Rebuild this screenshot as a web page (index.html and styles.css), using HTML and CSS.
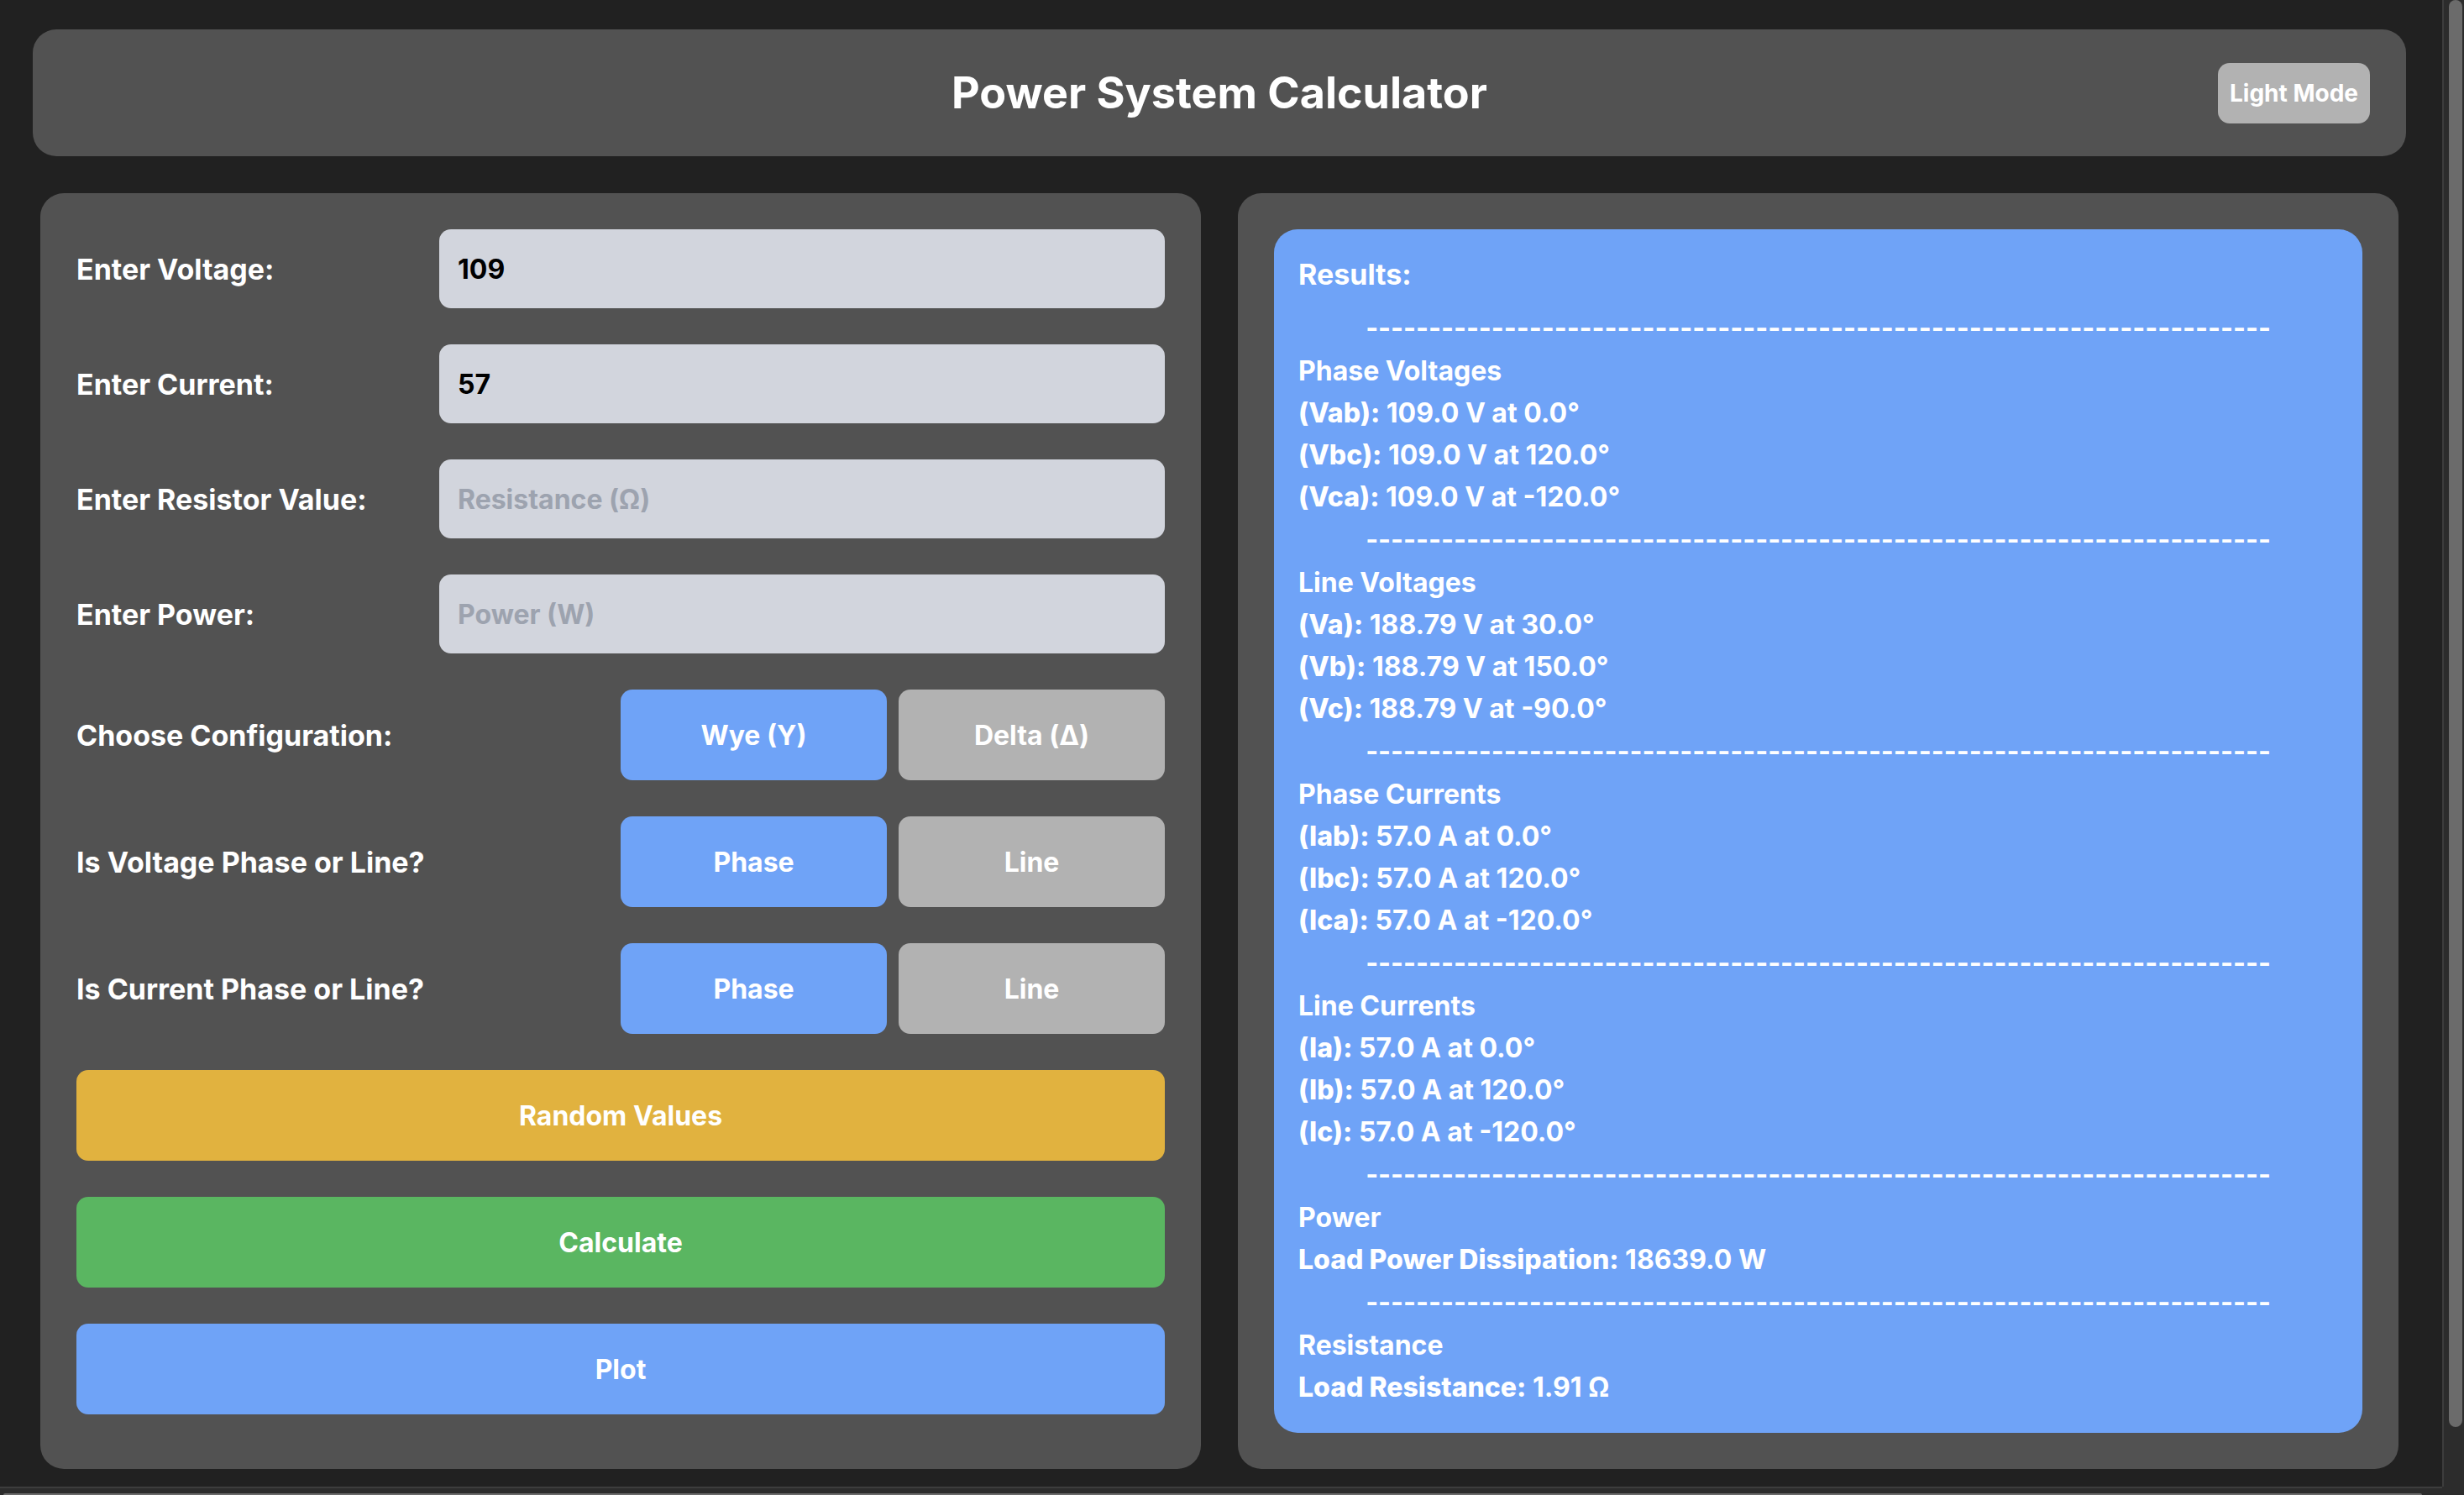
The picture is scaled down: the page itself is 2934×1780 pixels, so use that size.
FILE: index.html
```html
<!DOCTYPE html>
<html lang="en">
<head>
<meta charset="utf-8">
<title>Power System Calculator</title>
<link rel="stylesheet" href="styles.css">
</head>
<body>
<div class="window">
  <div class="page">
    <header class="header">
      <h1 class="title">Power System Calculator</h1>
      <button class="mode" type="button">Light Mode</button>
    </header>
    <main class="panels">
      <form class="panel form">
        <div class="field"><label for="voltage">Enter Voltage:</label><input id="voltage" type="text" placeholder="Voltage (V)" value="109"></div>
        <div class="field"><label for="current">Enter Current:</label><input id="current" type="text" placeholder="Current (A)" value="57"></div>
        <div class="field"><label for="resistance">Enter Resistor Value:</label><input id="resistance" type="text" placeholder="Resistance (Ω)"></div>
        <div class="field"><label for="power">Enter Power:</label><input id="power" type="text" placeholder="Power (W)"></div>
        <div class="choice" role="group" aria-labelledby="config-label">
          <span id="config-label">Choose Configuration:</span>
          <div class="options"><button class="btn blue" type="button">Wye (Y)</button><button class="btn grey" type="button">Delta (Δ)</button></div>
        </div>
        <div class="choice" role="group" aria-labelledby="voltage-type-label">
          <span id="voltage-type-label">Is Voltage Phase or Line?</span>
          <div class="options"><button class="btn blue" type="button">Phase</button><button class="btn grey" type="button">Line</button></div>
        </div>
        <div class="choice" role="group" aria-labelledby="current-type-label">
          <span id="current-type-label">Is Current Phase or Line?</span>
          <div class="options"><button class="btn blue" type="button">Phase</button><button class="btn grey" type="button">Line</button></div>
        </div>
        <button class="btn yellow" type="button">Random Values</button>
        <button class="btn green" type="button">Calculate</button>
        <button class="btn blue" type="button">Plot</button>
      </form>
      <section class="panel">
        <div class="results">
          <h2 class="results-title">Results:</h2>
          <p class="divider">------------------------------------------------------------------------</p>
          <h3>Phase Voltages</h3>
          <p><strong>(Vab):</strong> 109.0 V at 0.0°</p>
          <p><strong>(Vbc):</strong> 109.0 V at 120.0°</p>
          <p><strong>(Vca):</strong> 109.0 V at -120.0°</p>
          <p class="divider">------------------------------------------------------------------------</p>
          <h3>Line Voltages</h3>
          <p><strong>(Va):</strong> 188.79 V at 30.0°</p>
          <p><strong>(Vb):</strong> 188.79 V at 150.0°</p>
          <p><strong>(Vc):</strong> 188.79 V at -90.0°</p>
          <p class="divider">------------------------------------------------------------------------</p>
          <h3>Phase Currents</h3>
          <p><strong>(Iab):</strong> 57.0 A at 0.0°</p>
          <p><strong>(Ibc):</strong> 57.0 A at 120.0°</p>
          <p><strong>(Ica):</strong> 57.0 A at -120.0°</p>
          <p class="divider">------------------------------------------------------------------------</p>
          <h3>Line Currents</h3>
          <p><strong>(Ia):</strong> 57.0 A at 0.0°</p>
          <p><strong>(Ib):</strong> 57.0 A at 120.0°</p>
          <p><strong>(Ic):</strong> 57.0 A at -120.0°</p>
          <p class="divider">------------------------------------------------------------------------</p>
          <h3>Power</h3>
          <p><strong>Load Power Dissipation:</strong> 18639.0 W</p>
          <p class="divider">------------------------------------------------------------------------</p>
          <h3>Resistance</h3>
          <p><strong>Load Resistance:</strong> 1.91 Ω</p>
        </div>
      </section>
    </main>
  </div>
  <div class="track-v"><div class="thumb-v"></div></div>
  <div class="track-h"><div class="thumb-h"></div></div>
  <div class="corner"></div>
</div>
</body>
</html>
```
FILE: styles.css
```css
* { box-sizing: border-box; }

body {
  margin: 0;
  background: #212121;
  color: #fff;
  font-family: Inter, "Liberation Sans", sans-serif;
  font-size: 32px;
  font-weight: 650;
}

h1, h2, h3, p { margin: 0; }

button, input { font: inherit; border: 0; }

/* Page area with its two scroll tracks */
.window {
  display: grid;
  grid-template-columns: minmax(0, 1fr) 26px;
  grid-template-rows: 1fr 10px;
  min-height: 100vh;
}

.page { padding: 35px 43px 20px 39px; }

.header {
  display: grid;
  grid-template-columns: 1fr auto 1fr;
  align-items: center;
  padding: 40px 43px 39px;
  border-radius: 28px;
  background: #525252;
}

.title {
  grid-column: 2;
  font-size: 52px;
  line-height: 64px;
  font-weight: 700;
}

.mode {
  justify-self: end;
  height: 72px;
  padding: 0 14px;
  border-radius: 14px;
  background: #b2b2b2;
  color: #fff;
  font-size: 28px;
  font-weight: 700;
}

.panels {
  display: grid;
  grid-template-columns: 1fr 1fr;
  gap: 44px;
  padding: 44px 9px 0;
}

.panel {
  padding: 43px;
  border-radius: 28px;
  background: #525252;
}

.form {
  display: flex;
  flex-direction: column;
  gap: 43px;
  font-size: 34px;
  font-weight: 700;
}

.field {
  display: grid;
  grid-template-columns: 1fr 2fr;
  align-items: center;
}

.field input {
  width: 100%;
  height: 94px;
  padding: 0 22px;
  border-radius: 14px;
  background: #d2d5dd;
  color: #000;
  font-size: 32px;
  font-weight: 650;
}

.field input::placeholder { color: #9da3af; opacity: 1; }

.choice {
  display: grid;
  grid-template-columns: 1fr 1fr;
  align-items: center;
}

.options {
  display: grid;
  grid-template-columns: 1fr 1fr;
  gap: 14px;
}

.btn {
  height: 108px;
  border-radius: 14px;
  color: #fff;
  font-size: 32px;
  font-weight: 650;
}

.blue { background: #6fa3f7; }
.grey { background: #b2b2b2; }
.yellow { background: #e1b23f; }
.green { background: #5ab661; }

.results {
  padding: 29px;
  border-radius: 28px;
  background: #6fa3f7;
  line-height: 50px;
}

.results-title {
  margin-bottom: 13px;
  font-size: 34px;
  font-weight: 700;
}

.results h3 { font-size: 32px; font-weight: inherit; }
.results strong { font-weight: 800; }

.results .divider {
  line-height: 52px;
  text-align: center;
  white-space: nowrap;
}

/* Scroll tracks */
.track-v {
  padding: 0 2px 0 6px;
  border-left: 2px solid #3d3d3d;
  background: #2c2c2c;
}

.thumb-v {
  height: 96%;
  border-radius: 8px;
  background: #6b6b6b;
}

.track-h {
  padding: 6px 24px 0 4px;
  border-top: 2px solid #3d3d3d;
  background: #2c2c2c;
}

.thumb-h {
  height: 2px;
  border-radius: 4px 4px 0 0;
  background: #6b6b6b;
}

.corner { background: #2c2c2c; }
```
